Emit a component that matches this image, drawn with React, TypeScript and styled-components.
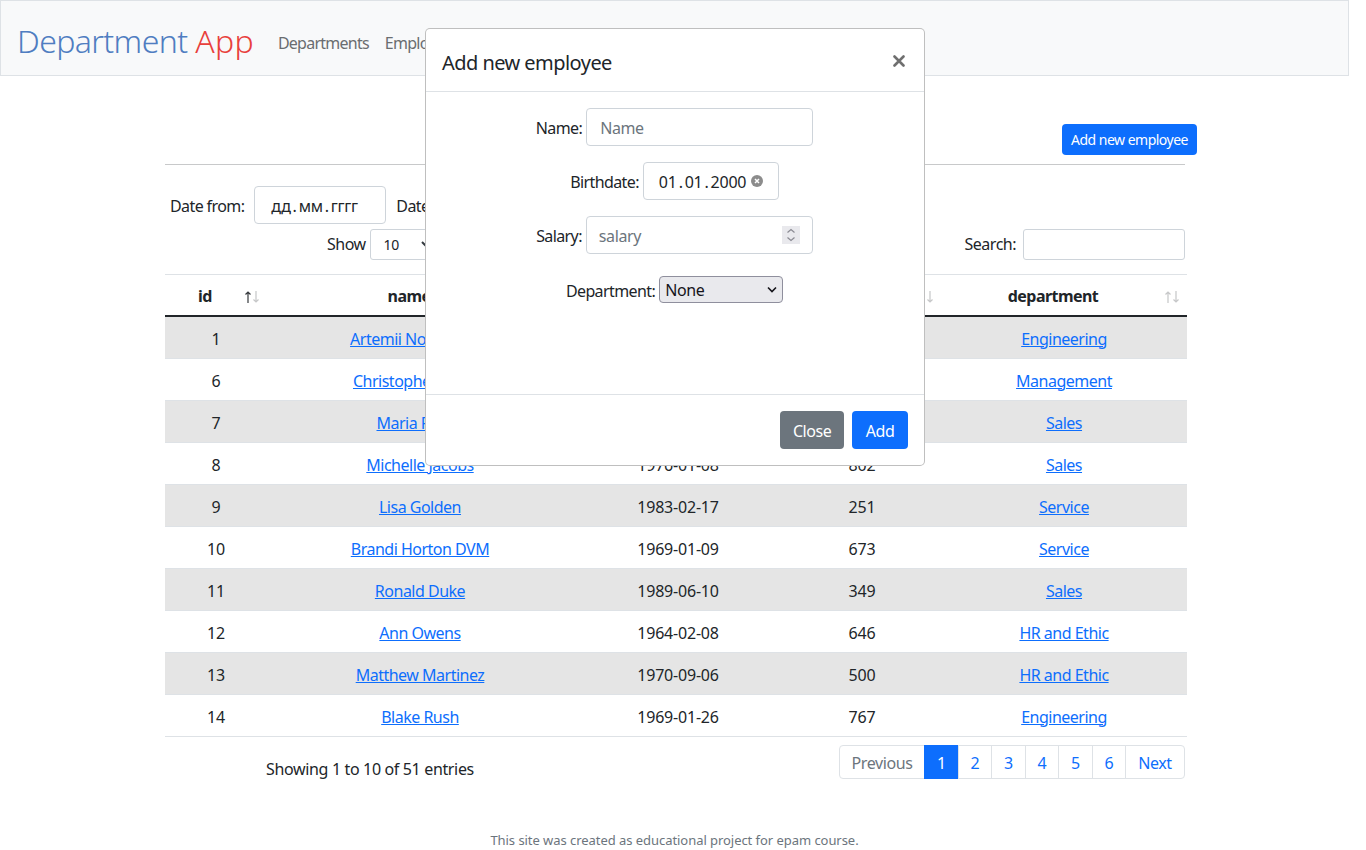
import React from 'react';
import styled, { createGlobalStyle } from 'styled-components';

const GlobalStyle = createGlobalStyle`
  html, body {
    margin: 0;
    padding: 0;
    height: 850px;
    overflow: hidden;
    background: #fff;
  }
  body {
    font-family: "Noto Sans", "Open Sans", sans-serif;
    font-size: 16px;
    line-height: 24px;
    letter-spacing: -0.4px;
    color: #212529;
  }
  * { box-sizing: border-box; }
`;

const Page = styled.div`
  width: 1349px;
  height: 850px;
  position: relative;
`;

const Navbar = styled.nav`
  height: 76px;
  display: flex;
  align-items: center;
  padding-left: 16px;
  background: #f8f9fa;
  border: 1px solid #dee2e6;
`;

const Brand = styled.a`
  font-size: 32px;
  font-weight: 300;
  letter-spacing: -0.6px;
  line-height: 40px;
  margin-right: 24px;
  margin-top: 6px;
  color: #4f7dc1;
  span { color: #e8403c; letter-spacing: 0.3px; }
`;

const NavLink = styled.a`
  color: #6a6d70;
  margin-right: 16px;
  margin-top: 10px;
  letter-spacing: -0.75px;
`;

const Main = styled.main`
  width: 1020px;
  margin-left: 165px;
  padding-top: 48px;
`;

const TopBar = styled.div`
  height: 31px;
  display: flex;
  justify-content: flex-end;
  margin-right: -12px;
`;

const Button = styled.button<{ $variant?: 'primary' | 'secondary'; $small?: boolean }>`
  font: inherit;
  letter-spacing: ${(p) => (p.$small ? '-0.5px' : '-0.4px')};
  color: #fff;
  border: 0;
  border-radius: 4px;
  background: ${(p) => (p.$variant === 'secondary' ? '#6c757d' : '#0d6efd')};
  height: ${(p) => (p.$small ? '31px' : '38px')};
  min-width: ${(p) => (p.$small ? '0' : '56px')};
  padding: ${(p) => (p.$small ? '0 9px' : '2px 12.5px 0')};
  font-size: ${(p) => (p.$small ? '14px' : '16px')};
`;

const Rule = styled.hr`
  margin: 9px 0 0;
  height: 1px;
  border: 0;
  background: #c8c9ca;
`;

const LabelText = styled.span`
  padding-top: 2px;
  letter-spacing: -0.6px;
`;

const ControlText = styled.span`
  padding-bottom: 2px;
  letter-spacing: -0.5px;
`;

const FilterRow = styled.div`
  margin-top: 21px;
  height: 38px;
  display: flex;
  align-items: center;
  padding-left: 5px;
  gap: 10px;
`;

const Field = styled.div`
  height: 38px;
  border: 1px solid #ced4da;
  border-radius: 4px;
  background: #fff;
  display: flex;
  align-items: center;
`;

const DateBox = styled(Field)`
  width: 132px;
  padding: 2px 0 0 16px;
  letter-spacing: -0.25px;
`;

const DateDot = styled.span`
  margin: 0 2px;
`;

const ControlsRow = styled.div`
  margin-top: 5px;
  height: 31px;
  display: flex;
  align-items: center;
  justify-content: space-between;
  padding-left: 162px;
`;

const Group = styled.label`
  display: flex;
  align-items: center;
  gap: 4px;
`;

const SmallSelect = styled.div`
  width: 70px;
  height: 31px;
  border: 1px solid #ced4da;
  border-radius: 3px;
  font-size: 14px;
  display: flex;
  align-items: center;
  justify-content: space-between;
  padding: 0 3px 0 13px;
`;

const SearchInput = styled.input`
  width: 162px;
  height: 31px;
  margin-left: 3px;
  border: 1px solid #ced4da;
  border-radius: 3px;
`;

const Table = styled.table`
  width: 1022px;
  margin-top: 14px;
  border-collapse: separate;
  border-spacing: 0;
  table-layout: fixed;
  border-top: 1px solid #dee2e6;
`;

const Th = styled.th<{ $width: number }>`
  width: ${(p) => p.$width}px;
  height: 42px;
  padding: 2px 30px 0 8px;
  position: relative;
  text-align: center;
  font-weight: 700;
  letter-spacing: -0.55px;
  border-bottom: 2px solid #212529;
`;

const SortArrows = styled.span`
  position: absolute;
  right: 8px;
  top: 16px;
  display: flex;
  gap: 2px;
`;

const Arrow = styled.svg<{ $active?: boolean }>`
  display: block;
  opacity: ${(p) => (p.$active ? 0.9 : 0.25)};
`;

const Tr = styled.tr<{ $striped: boolean }>`
  background: ${(p) => (p.$striped ? '#e5e5e5' : '#fff')};
`;

const Td = styled.td<{ $numeric?: boolean }>`
  height: 42px;
  padding: 2px 8px 0;
  text-align: center;
  letter-spacing: ${(p) => (p.$numeric ? '-0.2px' : '-0.5px')};
  border-bottom: 1px solid #dee2e6;
`;

const CellLink = styled.a`
  color: #0d6efd;
  text-decoration: underline;
`;

const BottomRow = styled.div`
  margin-top: 8px;
  display: flex;
  justify-content: space-between;
`;

const Info = styled.div`
  width: 410px;
  padding-top: 12px;
  text-align: center;
  letter-spacing: -0.35px;
`;

const Pagination = styled.ul`
  list-style: none;
  margin: 0;
  padding: 0;
  display: flex;
  height: 34px;
`;

const PageItem = styled.li<{ $width: number; $active?: boolean; $disabled?: boolean }>`
  width: ${(p) => p.$width}px;
  display: flex;
  align-items: center;
  justify-content: center;
  padding-top: 2px;
  margin-left: -1px;
  border: 1px solid ${(p) => (p.$active ? '#0d6efd' : '#dee2e6')};
  background: ${(p) => (p.$active ? '#0d6efd' : '#fff')};
  color: ${(p) => (p.$active ? '#fff' : p.$disabled ? '#6c757d' : '#0d6efd')};
  &:first-child { border-radius: 4px 0 0 4px; margin-left: 0; }
  &:last-child { border-radius: 0 4px 4px 0; }
`;

const Footer = styled.footer`
  position: absolute;
  left: 0;
  right: 0;
  top: 828px;
  text-align: center;
  font-size: 13px;
  letter-spacing: -0.05px;
  color: #6c757d;
`;

const Modal = styled.div`
  position: absolute;
  top: 28px;
  left: 425px;
  width: 500px;
  height: 438px;
  display: flex;
  flex-direction: column;
  background: #fff;
  border: 1px solid rgba(0, 0, 0, 0.25);
  border-radius: 5px;
`;

const ModalHeader = styled.div`
  height: 63px;
  flex: none;
  display: flex;
  align-items: center;
  justify-content: space-between;
  padding: 2px 19px 0 16px;
  border-bottom: 1px solid #dee2e6;
`;

const ModalTitle = styled.h5`
  margin: 0;
  padding-top: 3px;
  font-size: 20px;
  font-weight: 400;
  line-height: 30px;
  letter-spacing: -0.55px;
`;

const CloseIcon = styled.button`
  width: 12px;
  height: 12px;
  padding: 0;
  border: 0;
  background: none;
  display: flex;
`;

const ModalBody = styled.div`
  flex: 1;
  padding-top: 16px;
  display: flex;
  flex-direction: column;
  gap: 16px;
`;

const FormRow = styled.label<{ $extra?: number }>`
  display: flex;
  align-items: center;
  justify-content: center;
  gap: 4px;
  padding-right: 1px;
  margin-top: ${(p) => p.$extra || 0}px;
`;

const TextInput = styled.input`
  width: 227px;
  height: 38px;
  padding: 2px 13px 0;
  font: inherit;
  letter-spacing: inherit;
  border: 1px solid #ced4da;
  border-radius: 4px;
  &::placeholder { color: #6c757d; opacity: 1; }
`;

const NumberField = styled(Field)`
  position: relative;
  width: 227px;
  padding: 2px 0 0 12px;
  color: #6c757d;
`;

const Spinner = styled.span`
  position: absolute;
  right: 12px;
  top: 9px;
  width: 18px;
  height: 18px;
  background: #e9e9ed;
  display: flex;
`;

const BirthField = styled(Field)`
  width: 136px;
  padding: 0 0 0 15px;
  gap: 5px;
  letter-spacing: -0.25px;
`;

const BirthValue = styled.span`
  padding-top: 2px;
`;

const SelectWrap = styled.div`
  position: relative;
  display: flex;
`;

const Select = styled.select`
  appearance: none;
  width: 124px;
  height: 27px;
  padding: 0 0 0 5px;
  font: inherit;
  letter-spacing: inherit;
  color: #15141a;
  background: #e9e9ed;
  border: 1px solid #8f8f9d;
  border-radius: 4px;
`;

const SelectChevron = styled.svg`
  position: absolute;
  right: 6px;
  top: 10px;
  pointer-events: none;
`;

const ModalFooter = styled.div`
  height: 71px;
  flex: none;
  display: flex;
  align-items: center;
  justify-content: flex-end;
  gap: 8px;
  padding-right: 16px;
  border-top: 1px solid #dee2e6;
`;

const rows = [
  [1, 'Artemii Novoselskih', '1990-03-12', 412, 'Engineering'],
  [6, 'Christopher Moore', '1981-07-23', 530, 'Management'],
  [7, 'Maria Fisher', '1975-11-02', 718, 'Sales'],
  [8, 'Michelle Jacobs', '1976-01-08', 802, 'Sales'],
  [9, 'Lisa Golden', '1983-02-17', 251, 'Service'],
  [10, 'Brandi Horton DVM', '1969-01-09', 673, 'Service'],
  [11, 'Ronald Duke', '1989-06-10', 349, 'Sales'],
  [12, 'Ann Owens', '1964-02-08', 646, 'HR and Ethic'],
  [13, 'Matthew Martinez', '1970-09-06', 500, 'HR and Ethic'],
  [14, 'Blake Rush', '1969-01-26', 767, 'Engineering'],
];

const columns: [string, number][] = [
  ['id', 102],
  ['name', 306],
  ['birthdate', 210],
  ['salary', 158],
  ['department', 246],
];

const pages: [string, number][] = [
  ['Previous', 86],
  ['1', 35],
  ['2', 34],
  ['3', 35],
  ['4', 34],
  ['5', 35],
  ['6', 34],
  ['Next', 60],
];

export default function App() {
  return (
    <Page>
      <GlobalStyle />
      <Navbar>
        <Brand>
          Department <span>App</span>
        </Brand>
        <NavLink>Departments</NavLink>
        <NavLink>Employees</NavLink>
      </Navbar>

      <Main>
        <TopBar>
          <Button $small>Add new employee</Button>
        </TopBar>
        <Rule />

        <FilterRow>
          <LabelText>Date from:</LabelText>
          <DateBox>дд<DateDot>.</DateDot>мм<DateDot>.</DateDot>гггг</DateBox>
          <LabelText>Date to:</LabelText>
          <DateBox>дд<DateDot>.</DateDot>мм<DateDot>.</DateDot>гггг</DateBox>
        </FilterRow>

        <ControlsRow>
          <Group>
            <ControlText>Show</ControlText>
            <SmallSelect>
              10
              <svg width="16" height="16" viewBox="0 0 16 16" fill="none" stroke="#343a40" strokeWidth="2">
                <path d="M2 5l6 6 6-6" />
              </svg>
            </SmallSelect>
            <ControlText>entries</ControlText>
          </Group>
          <Group>
            <ControlText>Search:</ControlText>
            <SearchInput />
          </Group>
        </ControlsRow>

        <Table>
          <thead>
            <tr>
              {columns.map(([title, width], i) => (
                <Th key={title} $width={width}>
                  {title}
                  <SortArrows>
                    <Arrow $active={i === 0} width="6" height="12" viewBox="0 0 6 12" fill="none" stroke="#212529" strokeWidth="1.2">
                      <path d="M3 12V1M.5 3.500L3 1l2.500 2.500" />
                    </Arrow>
                    <Arrow width="6" height="12" viewBox="0 0 6 12" fill="none" stroke="#212529" strokeWidth="1.2">
                      <path d="M3 0v11M.5 8.500L3 11l2.500-2.500" />
                    </Arrow>
                  </SortArrows>
                </Th>
              ))}
            </tr>
          </thead>
          <tbody>
            {rows.map((row, i) => (
              <Tr key={row[0]} $striped={i % 2 === 0}>
                <Td $numeric>{row[0]}</Td>
                <Td><CellLink>{row[1]}</CellLink></Td>
                <Td $numeric>{row[2]}</Td>
                <Td $numeric>{row[3]}</Td>
                <Td><CellLink>{row[4]}</CellLink></Td>
              </Tr>
            ))}
          </tbody>
        </Table>

        <BottomRow>
          <Info>Showing 1 to 10 of 51 entries</Info>
          <Pagination>
            {pages.map(([label, width]) => (
              <PageItem key={label} $width={width} $active={label === '1'} $disabled={label === 'Previous'}>
                {label}
              </PageItem>
            ))}
          </Pagination>
        </BottomRow>
      </Main>

      <Footer>This site was created as educational project for epam course.</Footer>

      <Modal>
        <ModalHeader>
          <ModalTitle>Add new employee</ModalTitle>
          <CloseIcon aria-label="Close">
            <svg width="12" height="12" viewBox="0 0 12 12" fill="none" stroke="#6f6f6f" strokeWidth="2.6" strokeLinecap="round">
              <path d="M1.500 1.500l9 9M10.500 1.500l-9 9" />
            </svg>
          </CloseIcon>
        </ModalHeader>
        <ModalBody>
          <FormRow>
            <LabelText>Name:</LabelText>
            <TextInput placeholder="Name" />
          </FormRow>
          <FormRow>
            <LabelText>Birthdate:</LabelText>
            <BirthField>
              <BirthValue>01<DateDot>.</DateDot>01<DateDot>.</DateDot>2000</BirthValue>
              <svg width="12" height="12" viewBox="0 0 12 12">
                <circle cx="6" cy="6" r="6" fill="#8c8c8c" />
                <path d="M4 4l4 4M8 4l-4 4" stroke="#fff" strokeWidth="1.5" />
              </svg>
            </BirthField>
          </FormRow>
          <FormRow>
            <LabelText>Salary:</LabelText>
            <NumberField>
              salary
              <Spinner>
                <svg width="18" height="18" viewBox="0 0 18 18" fill="none" stroke="#8a8a92" strokeWidth="1.2">
                  <path d="M5.500 6.500L9 3.500l3.500 3M5.500 11.500L9 14.500l3.500-3" />
                </svg>
              </Spinner>
            </NumberField>
          </FormRow>
          <FormRow $extra={6}>
            <LabelText>Department:</LabelText>
            <SelectWrap>
              <Select defaultValue="None">
                <option>None</option>
              </Select>
              <SelectChevron width="10" height="7" viewBox="0 0 10 7" fill="none" stroke="#15141a" strokeWidth="1.6">
                <path d="M1 1.500l4 4 4-4" />
              </SelectChevron>
            </SelectWrap>
          </FormRow>
        </ModalBody>
        <ModalFooter>
          <Button $variant="secondary">Close</Button>
          <Button>Add</Button>
        </ModalFooter>
      </Modal>
    </Page>
  );
}
